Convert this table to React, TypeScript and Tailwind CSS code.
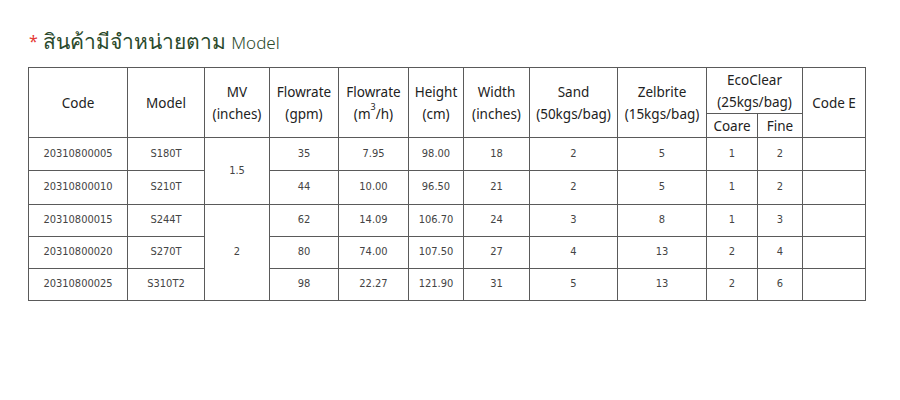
import React from 'react';

type Row = {
  code: string;
  model: string;
  gpm: string;
  m3h: string;
  height: string;
  width: string;
  sand: string;
  zel: string;
  coare: string;
  fine: string;
};

const rows: Row[] = [
  { code: '20310800005', model: 'S180T', gpm: '35', m3h: '7.95', height: '98.00', width: '18', sand: '2', zel: '5', coare: '1', fine: '2' },
  { code: '20310800010', model: 'S210T', gpm: '44', m3h: '10.00', height: '96.50', width: '21', sand: '2', zel: '5', coare: '1', fine: '2' },
  { code: '20310800015', model: 'S244T', gpm: '62', m3h: '14.09', height: '106.70', width: '24', sand: '3', zel: '8', coare: '1', fine: '3' },
  { code: '20310800020', model: 'S270T', gpm: '80', m3h: '74.00', height: '107.50', width: '27', sand: '4', zel: '13', coare: '2', fine: '4' },
  { code: '20310800025', model: 'S310T2', gpm: '98', m3h: '22.27', height: '121.90', width: '31', sand: '5', zel: '13', coare: '2', fine: '6' },
];

const rowHeights = ['h-[33px]', 'h-[34px]', 'h-[32px]', 'h-[32px]', 'h-[32px]'];

const th = 'border border-[#5a5a5a] font-normal text-center align-middle p-0';
const td = 'border border-[#5a5a5a] text-center align-middle p-0';

const App: React.FC = () => {
  return (
    <div className="w-[900px] h-[400px] bg-white overflow-hidden">
      <div className="pt-[28px] pl-[29px] flex items-start gap-[5px] h-[55px] text-[#2b4a2c] font-['Noto_Sans',sans-serif]">
        <span className="text-[#e53935] text-[16px] leading-[16px] mt-[5px]">*</span>
        <h2 className="text-[21px] leading-[27px] font-light">
          สินค้ามีจำหน่ายตาม <span className="text-[17px]">Model</span>
        </h2>
      </div>

      <table className="mt-[12px] ml-[28px] w-[837px] table-fixed border-collapse font-['Noto_Sans',sans-serif]">
        <colgroup>
          <col className="w-[99px]" />
          <col className="w-[77px]" />
          <col className="w-[65px]" />
          <col className="w-[69px]" />
          <col className="w-[70px]" />
          <col className="w-[55px]" />
          <col className="w-[66px]" />
          <col className="w-[88px]" />
          <col className="w-[89px]" />
          <col className="w-[51px]" />
          <col className="w-[45px]" />
          <col className="w-[63px]" />
        </colgroup>
        <thead className="text-[13.5px] leading-[22px] text-[#222]">
          <tr className="h-[46px]">
            <th rowSpan={2} className={th}>Code</th>
            <th rowSpan={2} className={th}>Model</th>
            <th rowSpan={2} className={th}>MV<br />(inches)</th>
            <th rowSpan={2} className={th}>Flowrate<br />(gpm)</th>
            <th rowSpan={2} className={th}>Flowrate<br />(m<sup className="text-[9px] align-[4px]">3</sup>/h)</th>
            <th rowSpan={2} className={th}>Height<br />(cm)</th>
            <th rowSpan={2} className={th}>Width<br />(inches)</th>
            <th rowSpan={2} className={th}>Sand<br />(50kgs/bag)</th>
            <th rowSpan={2} className={th}>Zelbrite<br />(15kgs/bag)</th>
            <th colSpan={2} className={th}>EcoClear<br />(25kgs/bag)</th>
            <th rowSpan={2} className={th}>Code E</th>
          </tr>
          <tr className="h-[24px]">
            <th className={th}>Coare</th>
            <th className={th}>Fine</th>
          </tr>
        </thead>
        <tbody className="text-[11px] text-[#444] font-['DejaVu_Sans_Condensed','DejaVu_Sans',sans-serif]">
          {rows.map((r, i) => (
            <tr key={r.code} className={rowHeights[i]}>
              <td className={td}>{r.code}</td>
              <td className={td}>{r.model}</td>
              {i === 0 && <td rowSpan={2} className={td}>1.5</td>}
              {i === 2 && <td rowSpan={3} className={td}>2</td>}
              <td className={td}>{r.gpm}</td>
              <td className={td}>{r.m3h}</td>
              <td className={td}>{r.height}</td>
              <td className={td}>{r.width}</td>
              <td className={td}>{r.sand}</td>
              <td className={td}>{r.zel}</td>
              <td className={td}>{r.coare}</td>
              <td className={td}>{r.fine}</td>
              <td className={td}></td>
            </tr>
          ))}
        </tbody>
      </table>
    </div>
  );
};

export default App;
